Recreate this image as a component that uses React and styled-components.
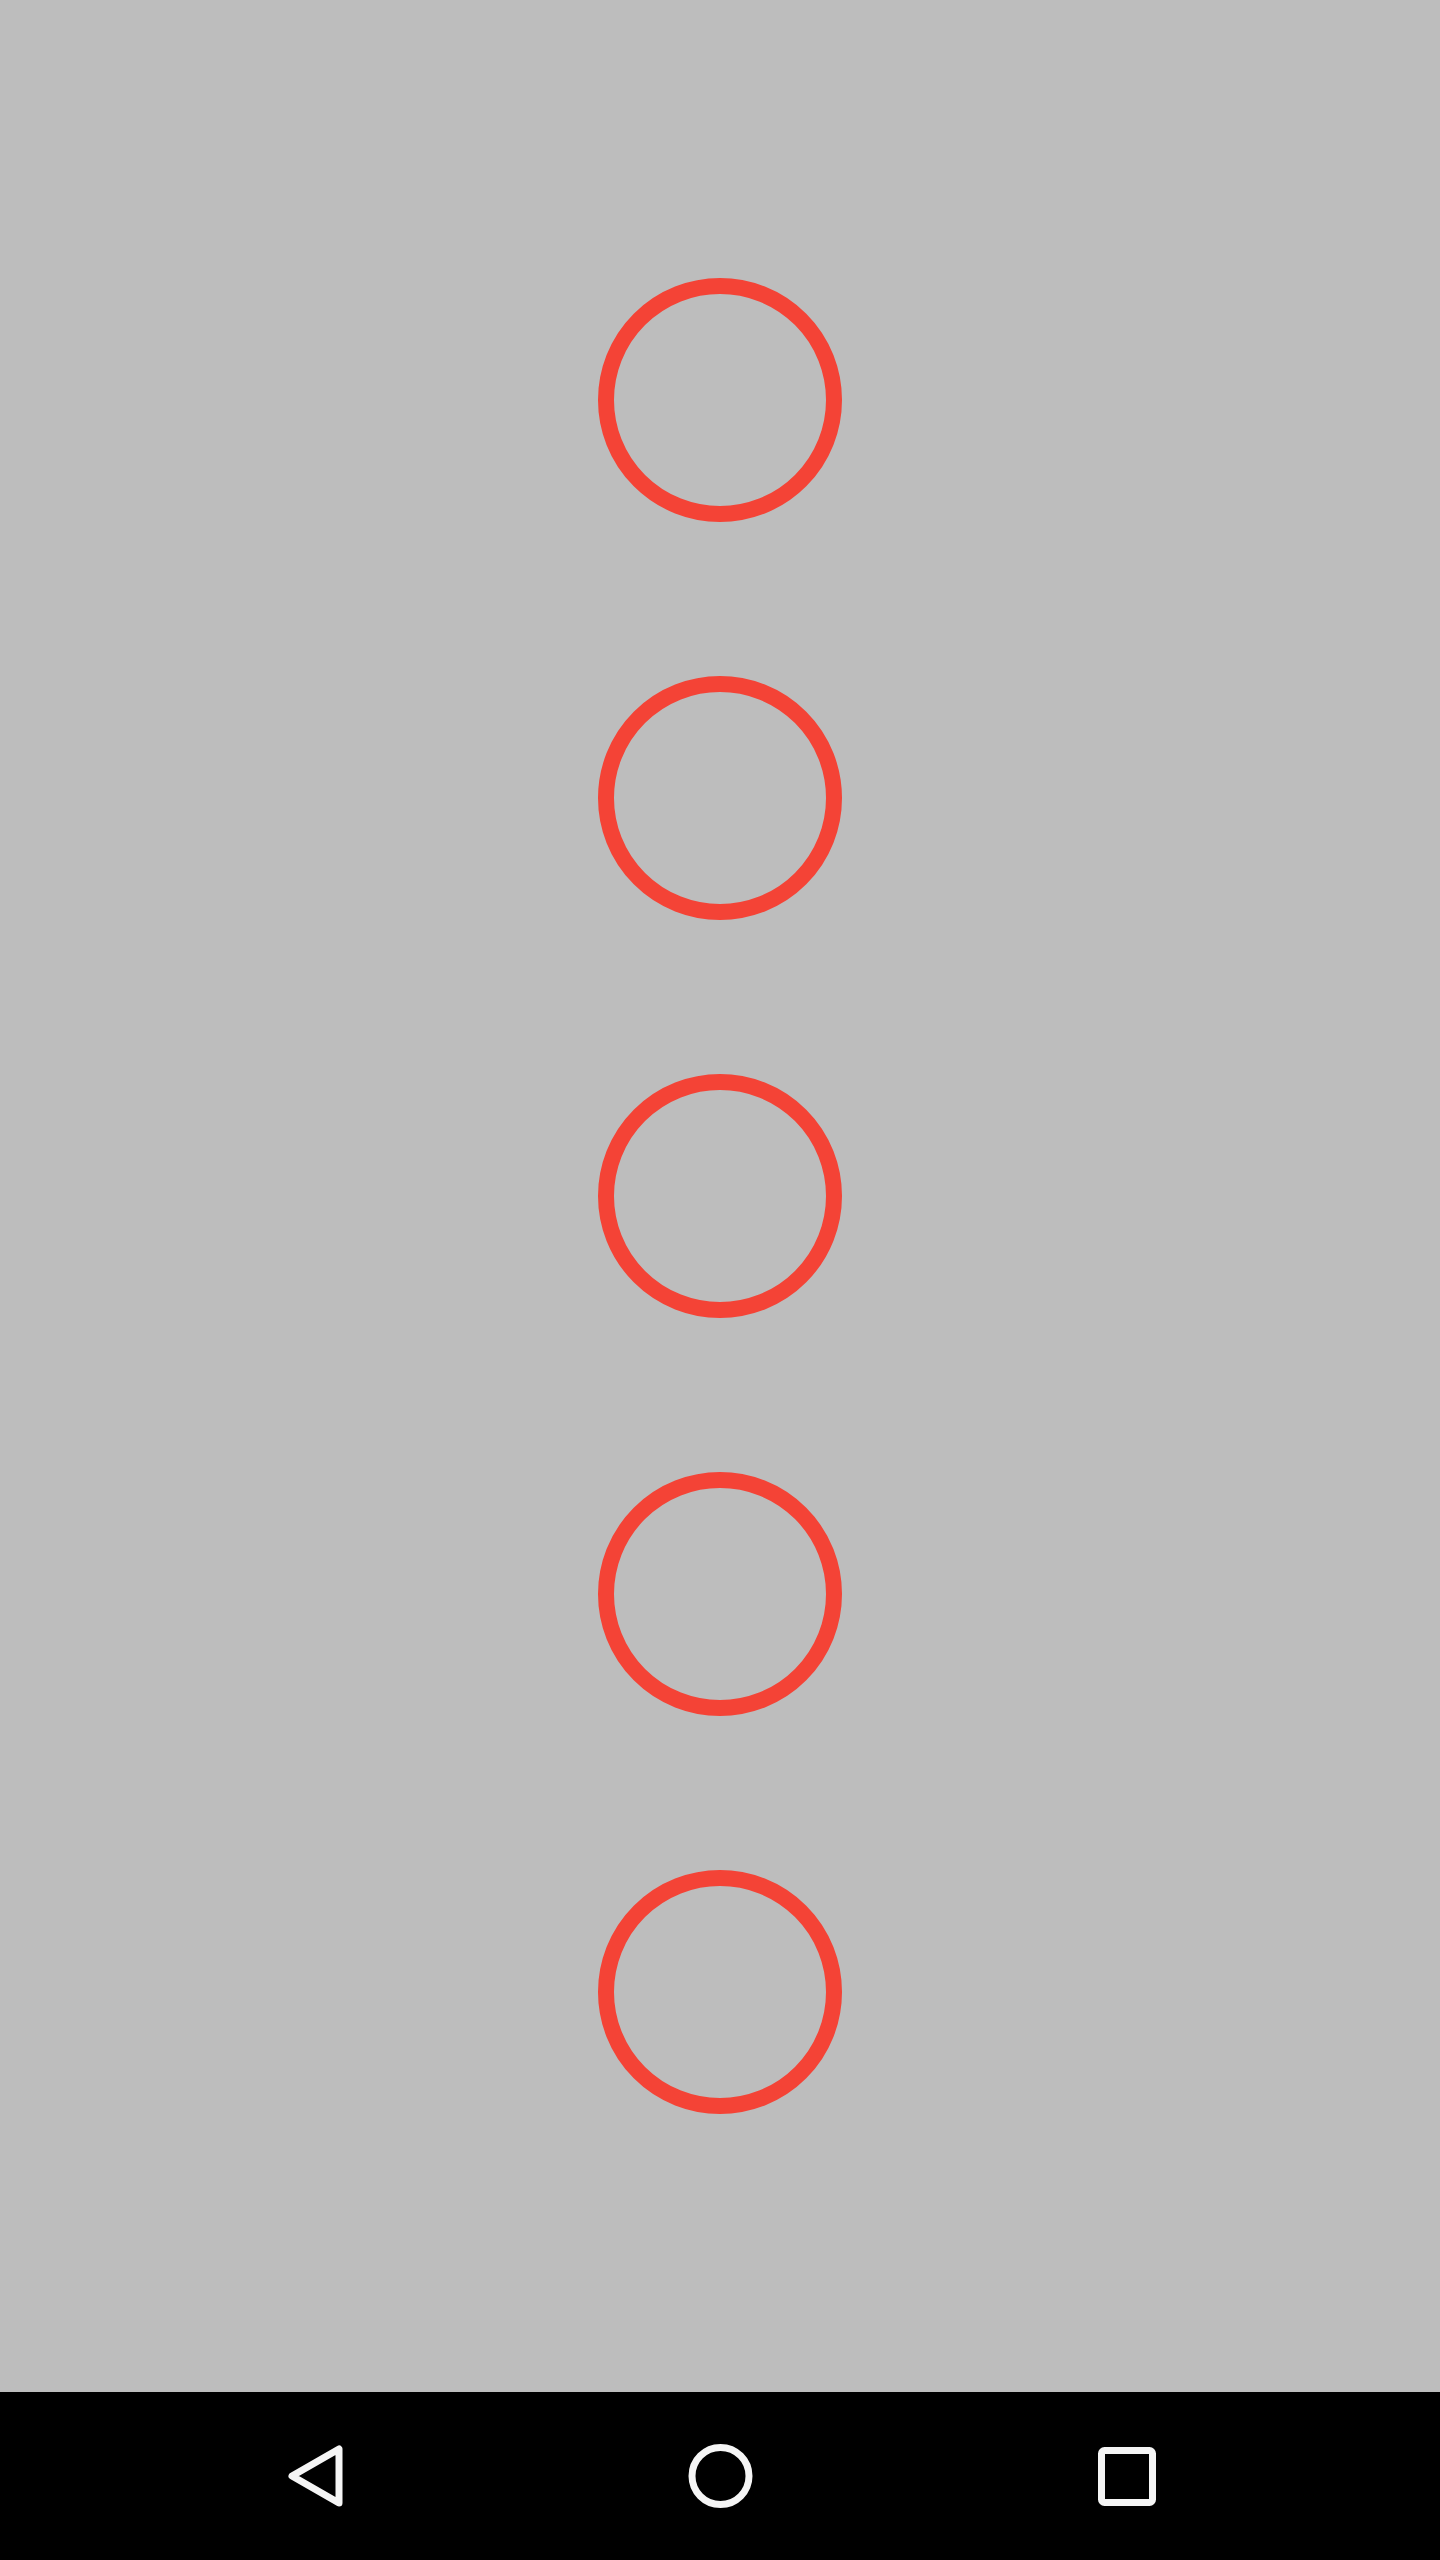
import React from "react";
import styled, { createGlobalStyle } from "styled-components";

const Global = createGlobalStyle`
  html, body { margin: 0; padding: 0; background: #000; }
  body { font-family: Roboto, "Liberation Sans", sans-serif; }
`;

const Screen = styled.div`
  width: 1440px;
  height: 2560px;
  display: flex;
  flex-direction: column;
`;

const Content = styled.main`
  flex: 1;
  background: #bdbdbd;
  display: flex;
  flex-direction: column;
  align-items: center;
  justify-content: center;
  gap: 154px;
`;

const Ring = styled.div`
  width: 244px;
  height: 244px;
  box-sizing: border-box;
  border-radius: 50%;
  border: 16px solid #f44336;
`;

const NavBar = styled.nav`
  height: 168px;
  background: #000;
  display: flex;
  justify-content: center;
  align-items: center;
`;

const NavButton = styled.button`
  width: 405px;
  height: 168px;
  border: 0;
  background: transparent;
  padding: 0;
  display: flex;
  align-items: center;
  justify-content: center;
  transform: translateX(${(p) => p.$shift || 0}px);
`;

const Icon = styled.svg`
  width: 80px;
  height: 80px;
  fill: none;
  stroke: #f5f5f5;
  stroke-width: 7;
  stroke-linejoin: round;
`;

export default function App() {
  return (
    <>
      <Global />
      <Screen>
        <Content>
          {[0, 1, 2, 3, 4].map((i) => (
            <Ring key={i} />
          ))}
        </Content>
        <NavBar>
          <NavButton aria-label="Back" $shift={-2}>
            <Icon viewBox="0 0 80 80">
              <path d="M66 13 L66 67 L19 40 Z" />
            </Icon>
          </NavButton>
          <NavButton aria-label="Home">
            <Icon viewBox="0 0 80 80">
              <circle cx="40.5" cy="40" r="28.5" />
            </Icon>
          </NavButton>
          <NavButton aria-label="Recents" $shift={1}>
            <Icon viewBox="0 0 80 80">
              <rect x="15.5" y="14.5" width="51" height="52" rx="3" />
            </Icon>
          </NavButton>
        </NavBar>
      </Screen>
    </>
  );
}
